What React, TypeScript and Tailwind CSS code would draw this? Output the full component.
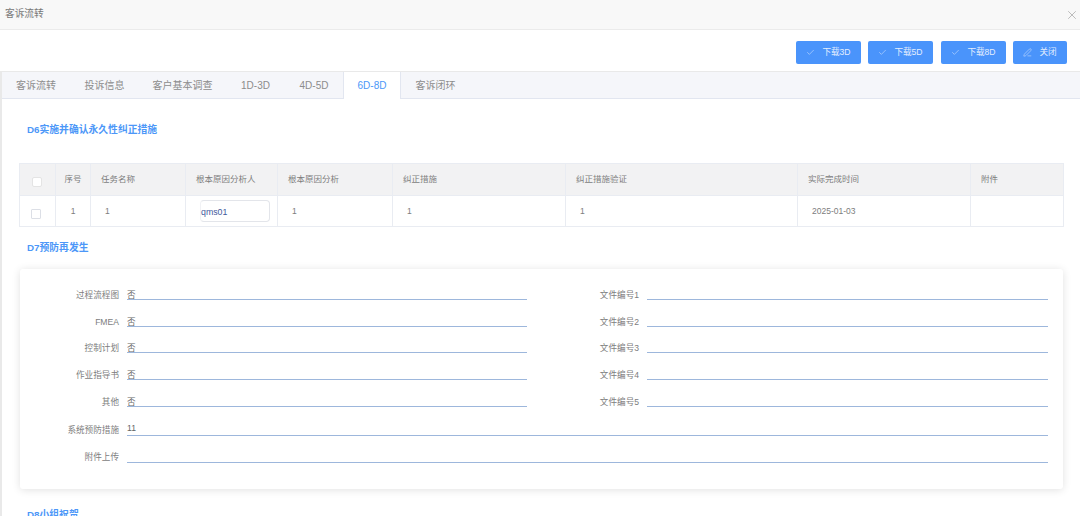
import { Check, PenLine, X } from "lucide-react";

const cjk = "font-['Liberation_Sans','Noto_Sans_CJK_SC',sans-serif]";

const tabs = ["客诉流转", "投诉信息", "客户基本调查", "1D-3D", "4D-5D", "6D-8D", "客诉闭环"];
const tabWidths = ["w-[68px]", "w-[69px]", "w-[87px]", "w-[59px]", "w-[58px]", "w-[58px]", "w-[69px]"];

const columns = [
  { label: "序号", width: "w-[35px]", align: "text-center" },
  { label: "任务名称", width: "w-[95px]", align: "text-left pl-[10px]" },
  { label: "根本原因分析人", width: "w-[92px]", align: "text-left pl-[10px]" },
  { label: "根本原因分析", width: "w-[115px]", align: "text-left pl-[10px]" },
  { label: "纠正措施", width: "w-[173px]", align: "text-left pl-[10px]" },
  { label: "纠正措施验证", width: "w-[232px]", align: "text-left pl-[10px]" },
  { label: "实际完成时间", width: "w-[173px]", align: "text-left pl-[10px]" },
  { label: "附件", width: "w-[93px]", align: "text-left pl-[10px]" },
];

const formRows = [
  ["过程流程图", "文件编号1"],
  ["FMEA", "文件编号2"],
  ["控制计划", "文件编号3"],
  ["作业指导书", "文件编号4"],
  ["其他", "文件编号5"],
];

const ActionButton = ({ label, wide, close, className = "" }: { label: string; wide?: boolean; close?: boolean; className?: string }) => (
  <button className={`flex h-[23px] items-center justify-center gap-[7px] rounded-[2px] bg-[#4a94fb] text-[8.6px] text-[#e4eefe] ${wide ? "w-[65px]" : "w-[54px]"} ${className}`}>
    {close ? <PenLine size={9} strokeWidth={1.3} /> : <Check size={9} strokeWidth={1.3} />}
    {label}
  </button>
);

const SectionTitle = ({ children }: { children: string }) => (
  <h3 className="text-[9.8px] leading-[14px] font-bold text-[#4c97f8]">{children}</h3>
);

const Field = ({ label, value, width, tight }: { label: string; value?: string; width: string; tight?: boolean }) => (
  <div className="flex items-end">
    <span className={`w-[119px] shrink-0 text-right text-[8.6px] leading-[12px] text-[#7d7d7d] ${tight ? "mb-[-1px]" : ""}`}>{label}</span>
    <div className={`ml-2 h-[14px] border-b border-[#9db7dc] text-[8.6px] leading-[12px] text-[#666] ${tight ? "pt-[3px]" : ""} ${width}`}>{value}</div>
  </div>
);

export default function App() {
  return (
    <div className={`h-[531px] w-[1080px] overflow-hidden bg-white ${cjk}`}>
      <div className="h-[516px] overflow-hidden">
        <header className="flex h-[30px] items-center justify-between border-b border-[#ebebeb] bg-[#f8f8f8] pr-px pl-[5px]">
          <span className="text-[9.7px] text-[#777]">客诉流转</span>
          <X size={14} strokeWidth={1.1} className="text-[#999]" />
        </header>

        <div className="flex h-[41px] items-start justify-end gap-[7px] pt-[11px] pr-[13px]">
          <ActionButton label="下载3D" wide />
          <ActionButton label="下载5D" wide className="mr-px" />
          <ActionButton label="下载8D" wide />
          <ActionButton label="关闭" close />
        </div>

        <div className="border-t border-l-2 border-[#e9e9e9]">
          <nav className="flex h-[27px] border-b border-[#e2e6f0] bg-[#f5f6fa]">
            {tabs.map((tab, i) => (
              <div
                key={tab}
                className={`flex h-[27px] items-center justify-center text-[10px] ${tabWidths[i]} ${
                  tab === "6D-8D"
                    ? "border-x border-[#e2e6f0] bg-white font-medium text-[#4c97f8]"
                    : "text-[#8c8c8c]"
                }`}
              >
                {tab}
              </div>
            ))}
          </nav>

          <section className="pt-[24px] pl-[25px]">
            <SectionTitle>D6实施并确认永久性纠正措施</SectionTitle>
          </section>

          <div className="mt-[26px] pl-[17px]">
            <table className="w-[1045px] table-fixed border-collapse text-[8.5px] text-[#7d7d7d]">
              <thead>
                <tr className="h-[32px] bg-[#f2f2f3]">
                  <th className="w-[36px] border border-[#e9ecf2]">
                    <span className="mt-[5px] ml-[12px] block h-[10px] w-[10px] rounded-[2px] border border-[#e4e4e4] bg-white" />
                  </th>
                  {columns.map((c) => (
                    <th key={c.label} className={`border border-[#e9ecf2] font-normal ${c.width} ${c.align}`}>
                      {c.label}
                    </th>
                  ))}
                </tr>
              </thead>
              <tbody>
                <tr className="h-[31px]">
                  <td className="border border-[#e9ecf2]">
                    <span className="mt-[5px] ml-[11px] block h-[10px] w-[10px] rounded-[1px] border border-[#dcdfe6]" />
                  </td>
                  <td className="border border-[#e9ecf2] text-center">1</td>
                  <td className="border border-[#e9ecf2] pl-[14px]">1</td>
                  <td className="border border-[#e9ecf2] pt-[4px] pb-[4px] pl-[14px] align-top">
                    <div className="flex h-[22px] w-[70px] items-center rounded-[4px] border border-[#e3e5ea] border-l-[#f1f2f5] pt-[3px] text-[8.8px] text-[#3f5a9c]">
                      qms01
                    </div>
                  </td>
                  <td className="border border-[#e9ecf2] pl-[14px]">1</td>
                  <td className="border border-[#e9ecf2] pl-[14px]">1</td>
                  <td className="border border-[#e9ecf2] pl-[14px]">1</td>
                  <td className="border border-[#e9ecf2] pl-[14px]">2025-01-03</td>
                  <td className="border border-[#e9ecf2]" />
                </tr>
              </tbody>
            </table>
          </div>

          <section className="mt-[14px] pl-[25px]">
            <SectionTitle>D7预防再发生</SectionTitle>
          </section>

          <div className="mt-[14px] ml-[18px] h-[220px] w-[1043px] rounded-[3px] bg-white pt-[17px] shadow-[0_1px_8px_rgba(0,0,0,0.12)]">
            <div className="flex flex-col gap-[12.7px]">
              {formRows.map(([left, right]) => (
                <div key={right} className="flex">
                  <div className="-ml-[20px]">
                    <Field label={left} value="否" width="w-[400px]" tight />
                  </div>
                  <div className="-ml-[7px]">
                    <Field label={right} width="w-[401px]" tight />
                  </div>
                </div>
              ))}
              <div className="mt-[3px] -ml-[20px]">
                <Field label="系统预防措施" value="11" width="w-[921px]" />
              </div>
              <div className="-ml-[20px]">
                <Field label="附件上传" width="w-[921px]" />
              </div>
            </div>
          </div>

          <section className="mt-[19px] pl-[25px]">
            <SectionTitle>D8小组祝贺</SectionTitle>
          </section>
        </div>
      </div>
    </div>
  );
}
